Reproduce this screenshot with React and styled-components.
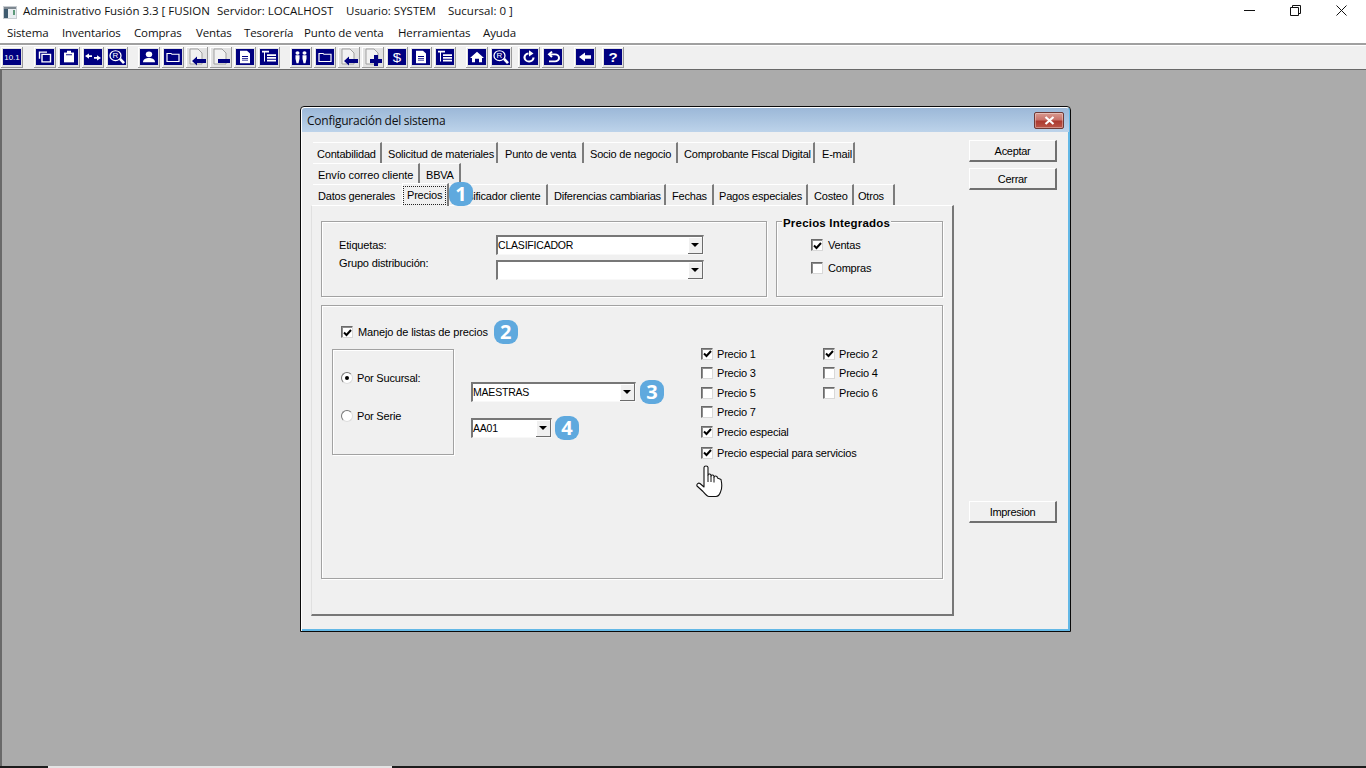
import React from "react";
import styled, { createGlobalStyle } from "styled-components";

const Global = createGlobalStyle`
  html, body { margin: 0; padding: 0; background: #fff; }
  body { font-family: "Liberation Sans", Arial, sans-serif; font-size: 11px; color: #000; overflow: hidden; }
  * { box-sizing: border-box; }
`;

const Page = styled.div`
  width: 1366px; height: 768px; display: flex; flex-direction: column; overflow: hidden; background: #fff;
`;
const TitleBar = styled.div`
  height: 24px; display: flex; align-items: center; padding-left: 3px; position: relative;
`;
const AppTitle = styled.div`
  display: flex; margin-left: 6px; font: 11.5px "Open Sans", "Liberation Sans", sans-serif; color: #111; white-space: nowrap; margin-top: -3px;
`;
const TitlePart = styled.span`
  display: block; width: ${p => p.$w}px;
`;
const WinControls = styled.div`
  margin-left: auto; display: flex; padding-right: 2px; margin-top: -4px;
`;
const WinBtn = styled.div`
  width: 46px; height: 24px; display: flex; align-items: center; justify-content: center;
`;
const MenuBar = styled.div`
  height: 19px; display: flex; padding: 0 0 2px 7px; align-items: center;
  font: 11.5px "Open Sans", "Liberation Sans", sans-serif; color: #111;
`;
const MenuItem = styled.span`
  width: ${p => p.$w}px; letter-spacing: -0.12px; white-space: nowrap;
`;
const Toolbar = styled.div`
  height: 26px; display: flex; align-items: center; background: #f0f0f0;
  border-top: 2px solid #a0a0a0; box-shadow: inset 0 1px 0 #fff;
`;
const ToolGroup = styled.div`
  display: flex; margin-left: ${p => p.$ml}px;
`;
const ToolBtn = styled.div`
  width: 22px; height: 21px; margin: 1px 1px 0 1px; display: flex; align-items: center; justify-content: center;
  border-right: 1px solid #9a9a9a; border-bottom: 1px solid #9a9a9a; box-shadow: inset 1px 1px 0 #fff;
  background: #e2e2e2;
`;
const Desktop = styled.div`
  flex: 1; position: relative; background: #ababab;
  border-top: 1px solid #696969; border-left: 2px solid #696969;
`;
const Strip = styled.div`
  height: 2px; background: #1c1c1c; display: flex; padding-left: 48px;
`;
const StripPiece = styled.div`
  width: 344px; background: #e4e4e4;
`;

/* Dialog window: a window placed on the desktop */
const Dialog = styled.div`
  position: absolute; left: 298px; top: 36px; width: 771px; height: 526px;
  background: #f0f0f0; border: 1px solid #0a0a0a; border-radius: 4px 4px 0 0;
  box-shadow: inset 1px 1px 0 #fff, inset -2px -2px 0 #63b8e6;
  display: flex; flex-direction: column;
`;
const DlgTitle = styled.div`
  height: 24px; margin: 1px 1px 0 1px; display: flex; align-items: center; padding: 0 5px 0 5px;
  border-radius: 3px 3px 0 0;
  background: linear-gradient(180deg, #9cb8d8 0%, #aac4e0 45%, #bdd3ea 100%);
`;
const DlgTitleText = styled.span`
  font: 12px "Open Sans", "Liberation Sans", sans-serif; color: #101010; letter-spacing: -0.25px;
`;
const CloseBtn = styled.div`
  margin-left: auto; width: 30px; height: 17px; display: flex; align-items: center; justify-content: center;
  border: 1px solid #6e3a36; border-radius: 2px;
  background: linear-gradient(180deg, #d89a90 0%, #c9726a 45%, #ab3a30 55%, #bc5648 100%);
  box-shadow: inset 0 0 0 1px rgba(255,255,255,.35);
`;
const DlgBody = styled.div`
  display: flex; padding: 10px 0 0 10px; gap: 15px;
`;
const LeftCol = styled.div`
  width: 643px; display: flex; flex-direction: column;
`;
const TabRow = styled.div`
  display: flex; height: 21px; padding-left: 2px; position: relative; z-index: ${p => p.$front ? 2 : 1};
`;
const Tab = styled.div`
  flex: none; width: ${p => p.$w}px; height: ${p => p.$selected ? 23 : 21}px;
  margin-top: ${p => p.$selected ? -1 : 0}px;
  display: flex; align-items: center; padding-left: ${p => p.$pad ?? 5}px; white-space: nowrap;
  background: #f0f0f0; position: relative;
  border-top: 1px solid #fff; border-left: ${p => p.$selected ? "1px solid #fff" : "0"};
  border-right: 2px solid ${p => p.$plain ? "#f0f0f0" : "#7c7c7c"};
  font-size: 11px; letter-spacing: ${p => p.$ls ?? -0.2}px;
  padding-top: 1px;
`;
const Focus = styled.span`
  border: 1px dotted #222; padding: 0 3px 2px 3px; line-height: 16px; height: 19px;
`;
const Badge = styled.span`
  flex: none; width: 24px; height: 24px; border-radius: 9px; background: #5fa9de;
  display: flex; align-items: center; justify-content: center;
  font: bold 20px "Open Sans", "Liberation Sans", sans-serif; color: #fff; line-height: 1;
`;
const TabBadge = styled(Badge)`
  position: absolute; left: 138px; top: -2px; z-index: 3;
`;
const Panel = styled.div`
  height: 411px; background: #f0f0f0; padding: 15px 9px 0 9px;
  border-top: 1px solid #fff; border-left: 1px solid #e0e0e0;
  border-right: 2px solid #777; border-bottom: 2px solid #777;
  display: flex; flex-direction: column; gap: 8px;
`;
const TopRow = styled.div`
  display: grid; grid-template-columns: 446px 167px; gap: 9px; height: 76px;
`;
const Etched = styled.div`
  border: 1px solid #a2a2a2; box-shadow: 1px 1px 0 #fff, inset 1px 1px 0 #fff;
`;
const LabelsBox = styled(Etched)`
  display: grid; grid-template-columns: 157px 208px; grid-template-rows: 20px 20px; row-gap: 5px;
  padding: 13px 0 0 17px; align-content: start;
`;
const FieldLabel = styled.span`
  line-height: 14px; align-self: ${p => p.$top ? "start" : "center"}; margin-top: ${p => p.$top ? -4 : 0}px;
  font-size: 11px; letter-spacing: -0.15px;
`;
const Legend = styled.span`
  display: block; width: fit-content; margin: -6px 0 0 5px; padding: 0 1px; height: 14px; background: #f0f0f0;
  font: bold 11.5px "Liberation Sans", sans-serif; line-height: 14px; letter-spacing: .2px;
`;
const GroupBox = styled(Etched)`
  display: flex; flex-direction: column;
`;
const GroupList = styled.div`
  display: flex; flex-direction: column; gap: 9px; padding: 8px 0 0 34px;
`;
const MainBox = styled(Etched)`
  height: 274px; padding: 14px 0 0 10px; display: flex; flex-direction: column; gap: 5px;
`;
const CheckLine = styled.span`
  display: flex; align-items: center; gap: 5px; height: 14px; white-space: nowrap; font-size: 11px; letter-spacing: -0.2px;
`;
const MasterRow = styled.div`
  display: flex; align-items: center; padding-left: 9px; height: 24px; gap: 6px;
  ${CheckLine} { letter-spacing: -0.13px; }
`;
const Columns = styled.div`
  display: flex;
`;
const RadioBox = styled(Etched)`
  flex: none; width: 122px; height: 106px; padding: 21px 0 0 8px; display: flex; flex-direction: column; gap: 24px;
  ${CheckLine} { gap: 4px; }
`;
const ComboCol = styled.div`
  flex: none; width: 230px; margin-left: 17px; padding-top: 31px; display: flex; flex-direction: column; gap: 12px;
`;
const ComboRow = styled.div`
  display: flex; align-items: center; gap: ${p => p.$gap}px; height: 24px;
`;
const PriceGrid = styled.div`
  flex: none; display: grid; grid-template-columns: 122px 100px; grid-auto-rows: 19.5px; margin-top: -5px; align-items: center;
  ${CheckLine} { gap: 4px; }
`;
const PriceWide = styled.div`
  grid-column: 1 / 3; margin-top: ${p => p.$mt || 0}px;
`;
const CheckBoxShape = styled.span`
  flex: none; width: 12px; height: 12px; background: #fff; display: flex; align-items: center; justify-content: center;
  border-top: 1px solid #6a6a6a; border-left: 1px solid #6a6a6a; border-right: 1px solid #d8d8d8; border-bottom: 1px solid #d8d8d8;
  box-shadow: inset 1px 1px 0 #8e8e8e;
`;
const RadioShape = styled.span`
  flex: none; width: 12px; height: 12px; border-radius: 50%; background: #fff; display: flex; align-items: center; justify-content: center;
  border: 1px solid; border-color: #777 #ddd #ddd #777;
  &::after { content: ""; width: 4px; height: 4px; border-radius: 50%; background: ${p => p.$on ? "#000" : "transparent"}; }
`;
const ComboWrap = styled.div`
  width: ${p => p.$w}px; height: 20px; background: #fff; display: flex; align-items: stretch;
  border-top: 2px solid #777; border-left: 2px solid #777; border-right: 1px solid #f8f8f8; border-bottom: 1px solid #f8f8f8;
  box-shadow: inset -1px 0 0 #c8c8c8;
`;
const ComboValue = styled.span`
  flex: 1; line-height: 17px; font-size: 10.5px; letter-spacing: -0.2px; white-space: nowrap;
`;
const ComboArrow = styled.span`
  width: 15px; background: #f0f0f0; display: flex; align-items: center; justify-content: center;
  border-right: 1px solid #6c6c6c; border-bottom: 1px solid #6c6c6c; box-shadow: inset 1px 1px 0 #fff;
  &::after { content: ""; border: 4px solid transparent; border-top: 4px solid #000; border-bottom: 0; }
`;
const RightCol = styled.div`
  width: 88px; display: flex; flex-direction: column;
`;
const PushBtn = styled.div`
  width: 88px; height: 22px; margin-top: ${p => p.$mt}px; background: #f0f0f0;
  display: flex; align-items: center; justify-content: center; font-size: 11px; letter-spacing: -0.3px;
  border-top: 1px solid #fff; border-left: 1px solid #fff; border-right: 2px solid #707070; border-bottom: 2px solid #707070;
`;
const HandCursor = styled.svg`
  position: absolute; left: 395px; top: 358px; z-index: 5;
`;
const ToolSvg = styled.svg`
  display: block; shape-rendering: geometricPrecision;
`;
const AppIconSvg = styled.svg`
  display: block;
`;

const W = "#fff", N = "#000080";
const Doc = () => <path d="M2 1h8l4 4v11H2z" fill="#f2f2f2" stroke="#a0a0a0" />;
const icons = {
  num: <text x="9" y="12.500" fontSize="8" fontFamily="Liberation Sans" fill={W} textAnchor="middle">10.1</text>,
  copy: <g fill="none" stroke={W} strokeWidth="1.400"><path d="M3.500 11V3.500H11" /><path d="M6 6h8.500v8.500H6z" /></g>,
  clip: <g fill={W}><path d="M4 4h10v11H4z" /><path d="M7 2h4v3H7z" /><path d="M6 6h6v1H6z" fill={N} /></g>,
  arrows: <g fill={W}><path d="M1 8l4-3v2h3v2H5v2z" /><path d="M17 10l-4-3v2h-3v2h3v2z" /></g>,
  search: <g><circle cx="7.500" cy="7.500" r="5.500" fill="none" stroke={W} strokeWidth="1.300" /><text x="7.500" y="10.500" fontSize="8" fontFamily="Liberation Sans" fill={W} textAnchor="middle">R</text><path d="M11 12l2-2 4 5-2 2z" fill={W} /></g>,
  person: <g fill={W}><circle cx="9" cy="6" r="3.200" /><path d="M3 15c0-4 3-5 6-5s6 1 6 5z" /></g>,
  folder: <path d="M3 6V5h4l1 1h7v8H3z" fill="none" stroke={W} strokeWidth="1.200" />,
  doc: <g><path d="M4 2h7l3 3v11H4z" fill={W} /><path d="M6 8h6v1H6zM6 10h6v1H6zM6 12h6v1H6z" fill={N} /></g>,
  tree: <g fill={W}><path d="M2 2h7v2H2zM4 4h1v10H4zM7 6h9v2H7zM7 9h9v2H7zM7 12h9v2H7z" /></g>,
  people: <g fill={W}><circle cx="5.500" cy="4.500" r="2" /><circle cx="12.500" cy="4.500" r="2" /><path d="M3.500 7h4v4l-1 5h-2l-1-5zM10.500 7h4v4l-1 5h-2l-1-5z" /></g>,
  dollar: <text x="9" y="14.500" fontSize="15" fontFamily="Liberation Sans" fill={W} textAnchor="middle">$</text>,
  home: <path d="M9 3l7 7h-2v5h-3v-4H7v4H4v-5H2z" fill={W} />,
  redo: <g><path d="M8.500 5a4.500 4.500 0 1 0 5 4.500" fill="none" stroke={W} strokeWidth="2.200" /><path d="M9 1.500v7l4.500-3.500z" fill={W} /></g>,
  undo: <g fill="none" stroke={W} strokeWidth="2"><path d="M6 6h5a3.500 3.500 0 0 1 0 8H5" /><path d="M8 3L5 6l3 3" /></g>,
  back: <path d="M3 9l6-5v3h6v4H9v3z" fill={W} />,
  help: <text x="9" y="15" fontSize="15" fontWeight="700" fontFamily="Liberation Sans" fill={W} textAnchor="middle">?</text>,
};
const ToolIcon = ({ name }) => {
  if (name === "docArrow" || name === "docMinus" || name === "docPlus") {
    return (
      <ToolSvg width="20" height="18" viewBox="0 0 18 18">
        <Doc />
        {name === "docArrow" && <path d="M4 13l5-4.500V11h9v4H9v2.500z" fill={N} />}
        {name === "docMinus" && <path d="M6 11h12v4H6z" fill={N} />}
        {name === "docPlus" && <path d="M10 7h4v4h4v4h-4v3h-4v-3H6v-4h4z" fill={N} />}
      </ToolSvg>
    );
  }
  return (
    <ToolSvg width="18" height="16" viewBox="0 0 18 18" preserveAspectRatio="none">
      <rect width="18" height="18" fill={N} />
      {icons[name]}
    </ToolSvg>
  );
};

const toolGroups = [
  { ml: 0, items: ["num"] },
  { ml: 9, items: ["copy", "clip", "arrows", "search"] },
  { ml: 8, items: ["person", "folder", "docArrow", "docMinus", "doc", "tree"] },
  { ml: 8, items: ["people", "folder", "docArrow", "docPlus", "dollar", "doc", "tree"] },
  { ml: 8, items: ["home", "search"] },
  { ml: 4, items: ["redo", "undo"] },
  { ml: 8, items: ["back"] },
  { ml: 4, items: ["help"] },
];

const menus = [["Sistema", 55], ["Inventarios", 72], ["Compras", 62], ["Ventas", 48], ["Tesorería", 60], ["Punto de venta", 94], ["Herramientas", 85], ["Ayuda", 40]];

const Check = ({ on, children }) => (
  <CheckLine>
    <CheckBoxShape>
      {on && <svg width="9" height="9" viewBox="0 0 9 9"><path d="M1 4.500l2.500 2.500L8 2" fill="none" stroke="#000" strokeWidth="2" /></svg>}
    </CheckBoxShape>
    {children}
  </CheckLine>
);
const Radio = ({ on, children }) => (
  <CheckLine><RadioShape $on={on} />{children}</CheckLine>
);
const Combo = ({ w, value }) => (
  <ComboWrap $w={w}><ComboValue>{value}</ComboValue><ComboArrow /></ComboWrap>
);

const row1 = [["Contabilidad", 69, 4], ["Solicitud de materiales", 116, 6], ["Punto de venta", 86, 7], ["Socio de negocio", 94, 6], ["Comprobante Fiscal Digital", 137, 6], ["E-mail", 40, 7]];
const row2 = [["Envío correo cliente", 107, 5, -0.1], ["BBVA", 41, 6]];

export default function App() {
  return (
    <Page>
      <Global />
      <TitleBar>
        <AppIconSvg width="14" height="13" viewBox="0 0 14 13">
          <rect width="14" height="13" fill="#c8cdd2" />
          <rect x="1" y="1" width="12" height="2" fill="#7d8790" />
          <rect x="1" y="3" width="4" height="9" fill="#3e5a6e" />
          <rect x="5" y="3" width="8" height="9" fill="#e8edf0" />
          <rect x="10" y="4" width="2" height="5" fill="#5d9a7a" />
        </AppIconSvg>
        <AppTitle>
          <TitlePart $w={194}>Administrativo Fusión 3.3 [ FUSION</TitlePart>
          <TitlePart $w={129}>Servidor: LOCALHOST</TitlePart>
          <TitlePart $w={102}>Usuario: SYSTEM</TitlePart>
          <TitlePart $w={70}>Sucursal: 0 ]</TitlePart>
        </AppTitle>
        <WinControls>
          <WinBtn><svg width="11" height="11" viewBox="0 0 11 11"><path d="M0 5.500h11" stroke="#111" /></svg></WinBtn>
          <WinBtn><svg width="11" height="11" viewBox="0 0 11 11" fill="none" stroke="#111"><path d="M.5 2.500h8v8h-8z" /><path d="M2.500 2.500v-2h8v8h-2" /></svg></WinBtn>
          <WinBtn><svg width="11" height="11" viewBox="0 0 11 11" stroke="#111"><path d="M.5.500l10 10M10.500.500l-10 10" /></svg></WinBtn>
        </WinControls>
      </TitleBar>
      <MenuBar>
        {menus.map(([m, w]) => <MenuItem key={m} $w={w}>{m}</MenuItem>)}
      </MenuBar>
      <Toolbar>
        {toolGroups.map((g, i) => (
          <ToolGroup key={i} $ml={g.ml}>
            {g.items.map((n, j) => <ToolBtn key={j}><ToolIcon name={n} /></ToolBtn>)}
          </ToolGroup>
        ))}
      </Toolbar>
      <Desktop>
        <Dialog>
          <DlgTitle>
            <DlgTitleText>Configuración del sistema</DlgTitleText>
            <CloseBtn>
              <svg width="11" height="9" viewBox="0 0 11 9"><path d="M1.500 1l8 7M9.500 1l-8 7" stroke="#fff" strokeWidth="2.200" /></svg>
            </CloseBtn>
          </DlgTitle>
          <DlgBody>
            <LeftCol>
              <TabRow>{row1.map(([t, w, pad]) => <Tab key={t} $w={w} $pad={pad}>{t}</Tab>)}</TabRow>
              <TabRow>{row2.map(([t, w, pad, ls]) => <Tab key={t} $w={w} $pad={pad} $ls={ls}>{t}</Tab>)}</TabRow>
              <TabRow $front>
                <Tab $w={89} $plain $pad={5}>Datos generales</Tab>
                <Tab $w={47} $selected $pad={0}><Focus>Precios</Focus></Tab>
                <Tab $w={99} $pad={3}>Clasificador cliente</Tab>
                <Tab $w={118} $pad={6}>Diferencias cambiarias</Tab>
                <Tab $w={48} $pad={6}>Fechas</Tab>
                <Tab $w={94} $pad={5}>Pagos especiales</Tab>
                <Tab $w={46} $pad={6}>Costeo</Tab>
                <Tab $w={41} $pad={4}>Otros</Tab>
                <TabBadge>1</TabBadge>
              </TabRow>
              <Panel>
                <TopRow>
                  <LabelsBox>
                    <FieldLabel>Etiquetas:</FieldLabel>
                    <Combo w={208} value="CLASIFICADOR" />
                    <FieldLabel $top>Grupo distribución:</FieldLabel>
                    <Combo w={208} value="" />
                  </LabelsBox>
                  <GroupBox>
                    <Legend>Precios Integrados</Legend>
                    <GroupList>
                      <Check on>Ventas</Check>
                      <Check>Compras</Check>
                    </GroupList>
                  </GroupBox>
                </TopRow>
                <MainBox>
                  <MasterRow>
                    <Check on>Manejo de listas de precios</Check>
                    <Badge>2</Badge>
                  </MasterRow>
                  <Columns>
                    <RadioBox>
                      <Radio on>Por Sucursal:</Radio>
                      <Radio>Por Serie</Radio>
                    </RadioBox>
                    <ComboCol>
                      <ComboRow $gap={4}><Combo w={165} value="MAESTRAS" /><Badge>3</Badge></ComboRow>
                      <ComboRow $gap={3}><Combo w={81} value="AA01" /><Badge>4</Badge></ComboRow>
                    </ComboCol>
                    <PriceGrid>
                      <Check on>Precio 1</Check>
                      <Check on>Precio 2</Check>
                      <Check>Precio 3</Check>
                      <Check>Precio 4</Check>
                      <Check>Precio 5</Check>
                      <Check>Precio 6</Check>
                      <PriceWide><Check>Precio 7</Check></PriceWide>
                      <PriceWide><Check on>Precio especial</Check></PriceWide>
                      <PriceWide $mt={3}><Check on>Precio especial para servicios</Check></PriceWide>
                    </PriceGrid>
                  </Columns>
                </MainBox>
              </Panel>
            </LeftCol>
            <RightCol>
              <PushBtn $mt={-2}>Aceptar</PushBtn>
              <PushBtn $mt={6}>Cerrar</PushBtn>
              <PushBtn $mt={311}>Impresion</PushBtn>
            </RightCol>
          </DlgBody>
          <HandCursor width="27" height="33" viewBox="0 0 27 33">
            <path d="M8 2.500C8 .5 12 .5 12 2.500V10C12 8.500 15 8.500 15 10.500V11C15 9.500 18 9.500 18 11.500V12.500C18 10.500 21.500 10.500 21.500 13L25 14.500C26 19 26 24 24.500 27C23.500 30 22 31.500 20 31.500H13C11 31.500 9.500 29.500 7 26.500L1 21C.3 19 2.500 17.500 4 18.500L8 22Z" fill="#fff" stroke="#111" strokeWidth="1.100" strokeLinejoin="round" />
            <path d="M12 10v7M15 11v6M18 12.500v5" stroke="#111" strokeWidth="1" fill="none" />
          </HandCursor>
        </Dialog>
      </Desktop>
      <Strip><StripPiece /></Strip>
    </Page>
  );
}
